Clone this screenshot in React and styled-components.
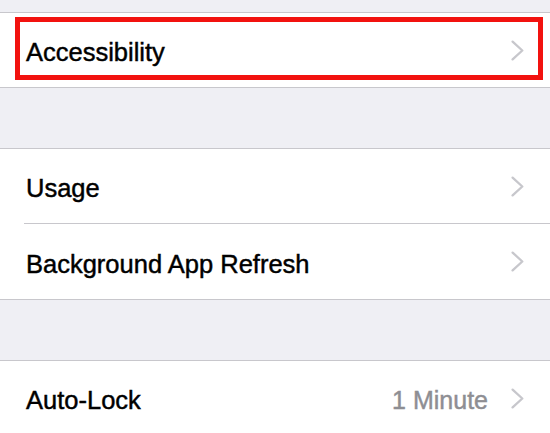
import React from 'react';
import styled, { createGlobalStyle } from 'styled-components';

const GlobalStyle = createGlobalStyle`
  html, body {
    margin: 0;
    padding: 0;
    background: #efeff4;
  }
  body {
    font-family: 'Liberation Sans', Arial, sans-serif;
  }
`;

const Chevron = () => (
  <ChevronSvg viewBox="0 0 13 21" aria-hidden="true">
    <polyline
      points="1.6,1.6 11.3,10.5 1.6,19.4"
      fill="none"
      stroke="#c7c7cc"
      strokeWidth="2.3"
      strokeLinecap="round"
      strokeLinejoin="round"
    />
  </ChevronSvg>
);

function SettingsRow({ label, value, highlighted }) {
  return (
    <Row>
      <Label>{label}</Label>
      <Trailing>
        {value ? <Value>{value}</Value> : null}
        <Chevron />
      </Trailing>
      {highlighted ? <Highlight /> : null}
    </Row>
  );
}

export default function App() {
  return (
    <>
      <GlobalStyle />
      <Screen>
        <Spacer $h={12} />
        <Group>
          <SettingsRow label="Accessibility" highlighted />
        </Group>
        <Spacer $h={60} />
        <Group>
          <SettingsRow label="Usage" />
          <SettingsRow label="Background App Refresh" />
        </Group>
        <Spacer $h={60} />
        <Group>
          <SettingsRow label="Auto-Lock" value="1 Minute" />
        </Group>
      </Screen>
    </>
  );
}

const Screen = styled.div`
  width: 550px;
  height: 433px;
  overflow: hidden;
  background: #efeff4;
  display: flex;
  flex-direction: column;
`;

const Spacer = styled.div`
  flex: 0 0 ${(p) => p.$h}px;
`;

const Group = styled.section`
  background: #fff;
  border-top: 1px solid #c8c7cc;
  border-bottom: 1px solid #c8c7cc;
  display: flex;
  flex-direction: column;
  flex-shrink: 0;
`;

const Row = styled.div`
  position: relative;
  height: 74px;
  box-sizing: border-box;
  padding: 5px 26px 0 26px;
  display: flex;
  align-items: center;
  justify-content: space-between;

  & + & {
    height: 76px;
    padding-top: 6px;
  }
  & + &::before {
    content: '';
    position: absolute;
    top: 0;
    left: 24px;
    right: 0;
    height: 1px;
    background: #c8c7cc;
  }
`;

const Label = styled.span`
  font-size: 25.5px;
  color: #000;
  white-space: nowrap;
  -webkit-text-stroke: 0.45px #000;
`;

const Trailing = styled.div`
  display: flex;
  align-items: center;
  gap: 23px;
`;

const Value = styled.span`
  font-size: 25px;
  color: #8e8e93;
  -webkit-text-stroke: 0.45px #8e8e93;
`;

const ChevronSvg = styled.svg`
  width: 13px;
  height: 21px;
  display: block;
  margin-top: -5px;
`;

const Highlight = styled.div`
  position: absolute;
  left: 15px;
  right: 7px;
  top: 4px;
  height: 63px;
  box-sizing: border-box;
  border: 5px solid #f2120f;
  pointer-events: none;
`;
